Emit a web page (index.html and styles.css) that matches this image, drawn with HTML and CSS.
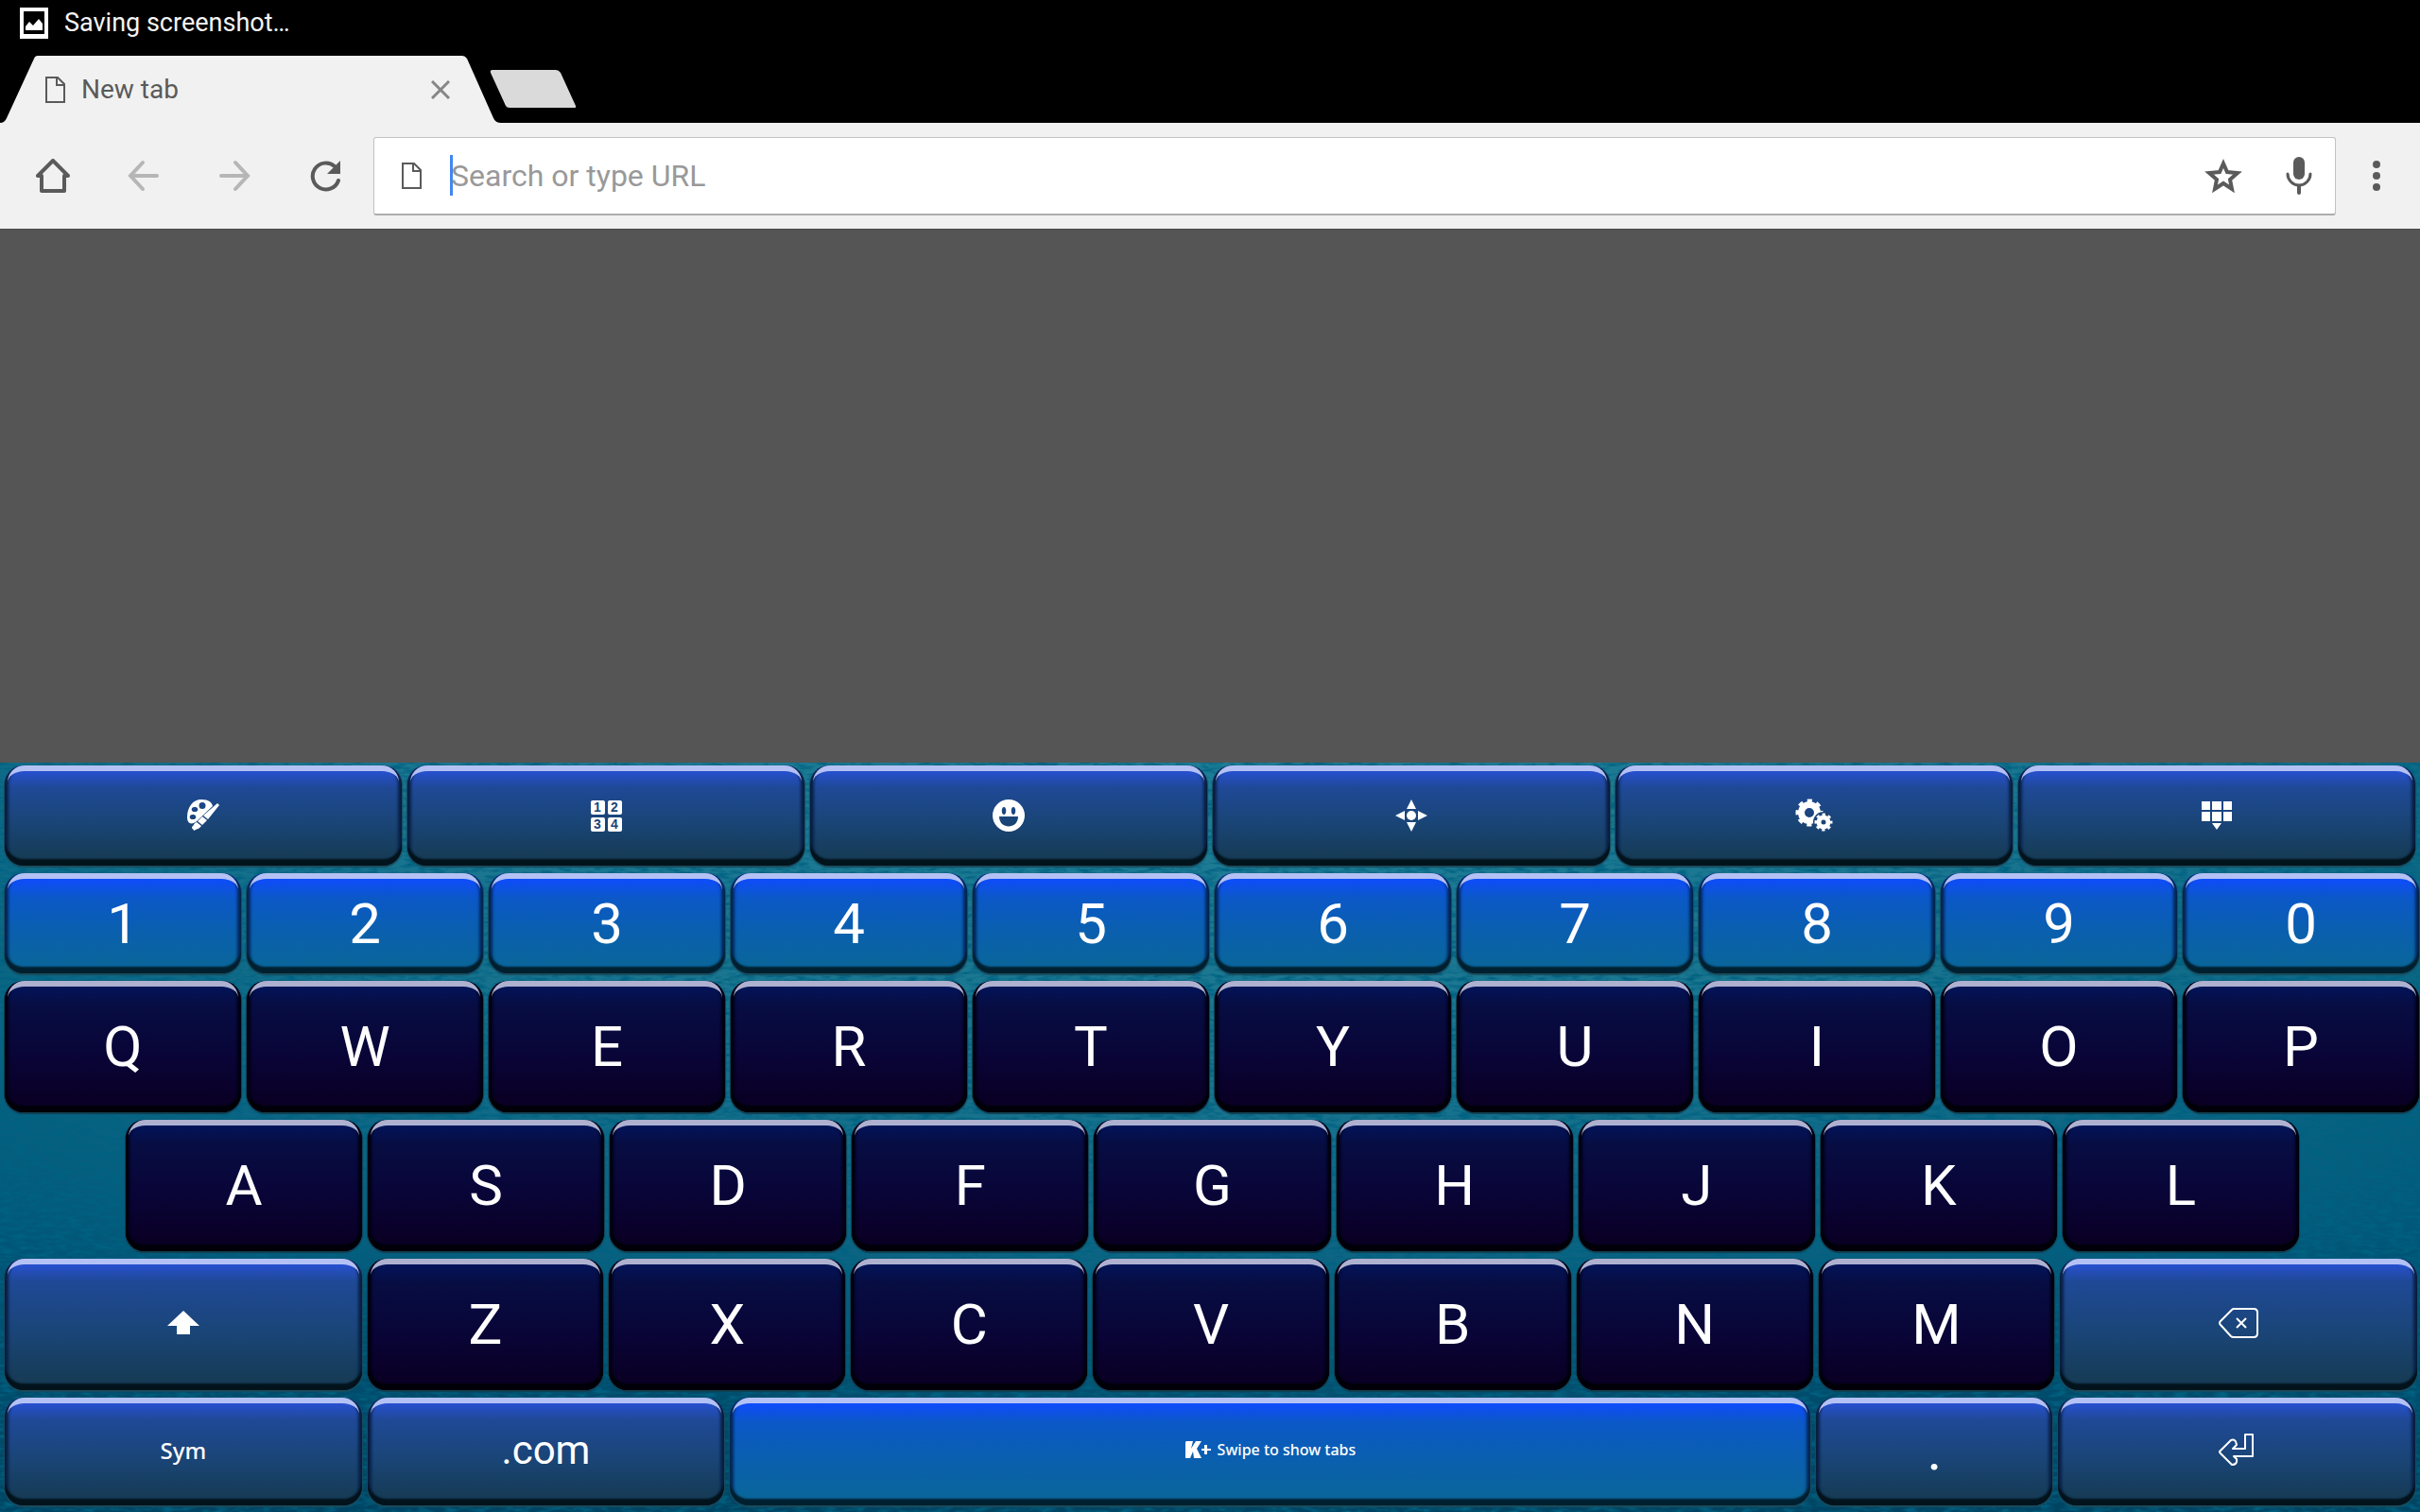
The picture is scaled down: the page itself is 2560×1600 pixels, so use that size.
FILE: index.html
```html
<!DOCTYPE html>
<html lang="en">
<head>
<meta charset="utf-8">
<title>New tab</title>
<link rel="stylesheet" href="styles.css">
</head>
<body>
<div class="screen">
  <header class="status">
    <svg width="30" height="33" viewBox="0 0 30 33" aria-hidden="true"><path fill="#fff" fill-rule="evenodd" d="M0 0H30V33H0ZM4 4V28H26V4Z"/><path fill="#fff" d="M6 24V20L10 15L14 19L20 12L24 17V24Z"/></svg>
    <span>Saving screenshot…</span>
  </header>

  <nav class="tabs">
    <div class="tab">
      <svg width="22" height="28" viewBox="0 0 22 28" aria-hidden="true"><path fill="none" stroke="#5a5a5a" stroke-width="2" d="M1 1H13L20 8V27H1ZM12 1V9H20"/></svg>
      <span class="tab-title">New tab</span>
      <button class="icon-btn" aria-label="Close tab"><svg width="20" height="20" viewBox="0 0 20 20"><path stroke="#868686" stroke-width="3" d="M1 1L19 19M19 1L1 19"/></svg></button>
    </div>
    <button class="new-tab" aria-label="Open a new tab"></button>
  </nav>

  <div class="toolbar">
    <div class="nav-buttons">
      <button class="icon-btn" aria-label="Home"><svg width="36" height="36" viewBox="0 0 36 36"><path fill="none" stroke="#5a5a5a" stroke-width="4" stroke-linejoin="round" d="M2 18H6V34H30V18H34L18 2Z"/></svg></button>
      <button class="icon-btn" aria-label="Back"><svg width="36" height="36" viewBox="0 0 36 36"><path fill="none" stroke="#b6b6b6" stroke-width="4" stroke-linecap="round" d="M17 4L4 18L17 32M5 18H32"/></svg></button>
      <button class="icon-btn" aria-label="Forward"><svg width="36" height="36" viewBox="0 0 36 36"><path fill="none" stroke="#b6b6b6" stroke-width="4" stroke-linecap="round" d="M19 4L32 18L19 32M31 18H4"/></svg></button>
      <button class="icon-btn" aria-label="Reload"><svg width="36" height="36" viewBox="0 0 36 36"><path fill="none" stroke="#5a5a5a" stroke-width="4" stroke-linecap="round" d="M32 23A14 14 0 1 1 28 8"/><path fill="#5a5a5a" d="M34 2V16H20Z"/></svg></button>
    </div>
    <div class="omnibox">
      <svg width="22" height="28" viewBox="0 0 22 28" aria-hidden="true"><path fill="none" stroke="#5a5a5a" stroke-width="2" d="M1 1H13L20 8V27H1ZM12 1V9H20"/></svg>
      <span class="caret"></span>
      <input type="text" placeholder="Search or type URL" aria-label="Search or type URL">
      <div class="omni-actions">
        <button class="icon-btn" aria-label="Bookmark"><svg width="40" height="38" viewBox="0 0 40 38"><path fill="none" stroke="#5a5a5a" stroke-width="4" d="M20 6L24 15L35 16L27 23L29 33L20 27L11 33L13 23L5 16L16 15Z"/></svg></button>
        <button class="icon-btn" aria-label="Voice search"><svg width="28" height="40" viewBox="0 0 28 40"><rect x="8" y="0" width="12" height="24" rx="6" fill="#5a5a5a"/><path fill="none" stroke="#5a5a5a" stroke-width="3" stroke-linecap="round" d="M2 18A12 12 0 0 0 26 18"/><path stroke="#5a5a5a" stroke-width="4" stroke-linecap="round" d="M14 31V38"/></svg></button>
      </div>
    </div>
    <button class="icon-btn menu" aria-label="Menu"><svg width="8" height="32" viewBox="0 0 8 32"><g fill="#5a5a5a"><circle cx="4" cy="4" r="4"/><circle cx="4" cy="16" r="4"/><circle cx="4" cy="28" r="4"/></g></svg></button>
  </div>

  <main class="page"></main>

  <section class="keyboard" aria-label="Keyboard">
    <svg class="grain" aria-hidden="true"><filter id="grain" x="0" y="0" width="100%" height="100%"><feTurbulence type="fractalNoise" baseFrequency="0.07 0.25" numOctaves="3" seed="4"/><feColorMatrix values="0 0 0 0 0  0 0 0 0 0.12  0 0 0 0 0.22  2.6 0 0 0 -1.05"/></filter><rect width="100%" height="100%" filter="url(#grain)"/></svg>

    <div class="row six">
      <button class="key fn" aria-label="Themes"><svg width="36" height="36" viewBox="0 0 36 36"><path fill="#fff" fill-rule="evenodd" d="M16 1C24 1 27 4 28 8L10 25C5 28 1 26 1 20C1 9 7 1 16 1ZM17 4A3.400 3.400 0 1 0 17 11A3.400 3.400 0 1 0 17 4ZM9 9A2.600 2.600 0 1 0 9 14A2.600 2.600 0 1 0 9 9ZM7 17A2.600 2.600 0 1 0 7 22A2.600 2.600 0 1 0 7 17Z"/><path fill="#fff" d="M33 5L35 7L23 22L18 18ZM17 19L22 23L17 28L12 24ZM11 25L16 29C13 33 11 32 8 34C8 32 6 33 6 30C8 29 8 26 11 25Z"/></svg></button>
      <button class="key fn" aria-label="Number pad"><span class="numpad"><i>1</i><i>2</i><i>3</i><i>4</i></span></button>
      <button class="key fn" aria-label="Emoji"><svg width="34" height="34" viewBox="0 0 34 34"><path fill="#fff" fill-rule="evenodd" d="M17 0A17 17 0 1 0 17 34A17 17 0 1 0 17 0ZM12 8C15 8 15 16 12 16C9 16 9 8 12 8ZM22 8C25 8 25 16 22 16C19 16 19 8 22 8ZM7 18H27C27 32 7 32 7 18Z"/></svg></button>
      <button class="key fn" aria-label="Cursor control"><svg width="34" height="34" viewBox="0 0 34 34"><g fill="#fff"><circle cx="17" cy="17" r="5"/><path d="M17 0L22 10H12ZM17 34L22 24H12ZM0 17L10 12V22ZM34 17L24 12V22Z"/></g></svg></button>
      <button class="key fn" aria-label="Settings"><svg width="40" height="36" viewBox="0 0 40 36"><g fill="none" stroke="#fff"><circle cx="15" cy="15" r="8.500" stroke-width="7"/><circle cx="15" cy="15" r="12.500" stroke-width="4" stroke-dasharray="5 4.817" stroke-dashoffset="2.500"/><circle cx="30" cy="25" r="5" stroke="#1b4577" stroke-width="12"/><circle cx="30" cy="25" r="5" stroke-width="5"/><circle cx="30" cy="25" r="8" stroke-width="3" stroke-dasharray="3.200 3.083" stroke-dashoffset="1.600"/></g></svg></button>
      <button class="key fn" aria-label="Hide keyboard"><svg width="32" height="30" viewBox="0 0 32 30"><path fill="#fff" d="M0 0H9V9H0ZM11 0H21V9H11ZM23 0H32V9H23ZM0 11H9V21H0ZM11 11H21V21H11ZM23 11H32V21H23ZM11 23H21L16 30Z"/></svg></button>
    </div>

    <div class="row ten">
      <button class="key num">1</button><button class="key num">2</button><button class="key num">3</button><button class="key num">4</button><button class="key num">5</button><button class="key num">6</button><button class="key num">7</button><button class="key num">8</button><button class="key num">9</button><button class="key num">0</button>
    </div>

    <div class="row ten tall">
      <button class="key">Q</button><button class="key">W</button><button class="key">E</button><button class="key">R</button><button class="key">T</button><button class="key">Y</button><button class="key">U</button><button class="key">I</button><button class="key">O</button><button class="key">P</button>
    </div>

    <div class="row nine tall">
      <button class="key">A</button><button class="key">S</button><button class="key">D</button><button class="key">F</button><button class="key">G</button><button class="key">H</button><button class="key">J</button><button class="key">K</button><button class="key">L</button>
    </div>

    <div class="row shift tall">
      <button class="key fn" aria-label="Shift"><svg width="34" height="25" viewBox="0 0 34 25"><path fill="#fff" d="M17 0L34 16H24V25H10V16H0Z"/></svg></button>
      <button class="key">Z</button><button class="key">X</button><button class="key">C</button><button class="key">V</button><button class="key">B</button><button class="key">N</button><button class="key">M</button>
      <button class="key fn" aria-label="Backspace"><svg width="42" height="32" viewBox="0 0 42 32"><path fill="none" stroke="#fff" stroke-width="2" stroke-linejoin="round" d="M14 2Q15 1 16 1H37Q41 1 41 5V27Q41 31 37 31H16Q14 31 13 30L2 18Q0 16 2 14ZM19 11L29 21M29 11L19 21"/></svg></button>
    </div>

    <div class="row bottom">
      <button class="key fn sym">Sym</button>
      <button class="key fn com">.com</button>
      <button class="key num space"><svg width="27" height="18" viewBox="0 0 27 18" aria-hidden="true"><path fill="#fff" d="M1 0H8L6 8L11 0H17L12 8L17 18H9L8 11L5 18H0V1ZM20 4H23V8H27V10H23V14H20V10H17V8H20Z"/></svg><span>Swipe to show tabs</span></button>
      <button class="key fn">.</button>
      <button class="key fn" aria-label="Enter"><svg width="38" height="34" viewBox="0 0 38 34"><path fill="none" stroke="#fff" stroke-width="2" stroke-linejoin="round" d="M28 1H36V24H16L19 27Q20 33 14 33L2 21Q0 19 2 18L13 7Q18 5 19 12L15 16H28Z"/></svg></button>
    </div>
  </section>
</div>
</body>
</html>
```
FILE: styles.css
```css
* {
  box-sizing: border-box;
}

body {
  margin: 0;
  font-family: Roboto, "Liberation Sans", sans-serif;
  background: #555;
}

button {
  margin: 0;
  padding: 0;
  border: 0;
  background: none;
  color: inherit;
  font: inherit;
}

svg {
  display: block;
  flex: none;
}

.screen {
  display: flex;
  flex-direction: column;
  min-height: 100vh;
}

.status {
  display: flex;
  align-items: center;
  gap: 17px;
  height: 48px;
  padding-left: 21px;
  background: #000;
  color: #f4f4f4;
  font-size: 27px;
}

.tabs {
  display: flex;
  align-items: flex-start;
  padding-top: 11px;
  background: #000;
}

.tab {
  display: flex;
  align-items: center;
  gap: 16px;
  width: 530px;
  height: 71px;
  padding: 0 54px 0 48px;
  background: #f1f1f1;
  clip-path: path("M0 71Q5 71 7 66L36 3Q37 0 40 0H489Q492 0 494 3L522 66Q524 71 530 71Z");
}

.tab-title {
  flex: 1;
  color: #5a5a5a;
  font-size: 28px;
}

.new-tab {
  width: 92px;
  height: 40px;
  margin: 15px 0 0 -12px;
  background: #dadada;
  clip-path: path("M3 0H70Q73 0 75 3L91 38Q92 40 89 40H21Q18 40 17 38L1 3Q0 0 3 0Z");
}

.toolbar {
  display: flex;
  align-items: center;
  height: 113px;
  padding: 0 42px 0 38px;
  background: #f1f1f1;
  border-bottom: 1px solid #4a4a4a;
}

.nav-buttons {
  display: flex;
  gap: 60px;
  margin-right: 33px;
}

.omnibox {
  display: flex;
  flex: 1;
  align-items: center;
  height: 83px;
  padding: 0 24px 0 29px;
  border: 1px solid #c2c2c2;
  border-bottom: 2px solid #adadad;
  border-radius: 3px;
  background: #fff;
}

.caret {
  width: 3px;
  height: 43px;
  margin: 0 -2px 0 29px;
  background: #4285f4;
}

.omnibox input {
  flex: 1;
  min-width: 0;
  height: 60px;
  padding: 0;
  border: 0;
  outline: 0;
  background: none;
  font: 32px Roboto, "Liberation Sans", sans-serif;
}

.omnibox input::placeholder {
  color: #999;
  opacity: 1;
}

.omni-actions {
  display: flex;
  align-items: center;
  gap: 46px;
}

.menu {
  margin-left: 39px;
}

.page {
  flex: 1;
}

.keyboard {
  position: relative;
  display: grid;
  gap: 8px;
  padding: 3px 0 7px;
  background:
    radial-gradient(ellipse 70% 90% at 50% 0, #1e7d96 0, #1b7690 45%, transparent 100%),
    linear-gradient(#005f7e, #00587a 60%, #004463);
}

.grain {
  position: absolute;
  inset: 0;
  width: 100%;
  height: 100%;
}

.row {
  position: relative;
  display: grid;
  gap: 6px;
  padding: 0 1px 0 5px;
  grid-auto-rows: 106px;
}

.tall {
  grid-auto-rows: 139px;
}

.six {
  grid-template-columns: repeat(6, 1fr);
  padding-right: 5px;
}

.ten {
  grid-template-columns: repeat(10, 1fr);
}

.nine {
  grid-template-columns: repeat(9, 1fr);
  padding: 0 5%;
  padding-left: calc(5% + 5px);
}

.shift {
  grid-template-columns: 378fr repeat(7, 250fr) 378fr;
  padding-right: 3px;
}

.bottom {
  grid-template-columns: 378fr 378fr 1144fr 250fr 378fr;
  grid-auto-rows: 114px;
  padding-right: 5px;
}

.key {
  position: relative;
  display: flex;
  align-items: center;
  justify-content: center;
  border-radius: 20px;
  background: linear-gradient(#03145a 6px, #070d42 26px, #090538 55%, #0a0026 90%);
  box-shadow:
    inset 0 -7px 2px #010008,
    inset 4px 0 3px #010012,
    inset -4px 0 3px #010012,
    0 1px 1px 1px #123f50;
  color: #fff;
  font-size: 60px;
}

.key::before {
  content: "";
  position: absolute;
  inset: 0 3px auto;
  height: 32px;
  border-top: 6px solid #aeb2d0;
  border-radius: 18px;
}

.fn {
  background: linear-gradient(#2750d0 6px, #1f4996 24px, #1a4578 55%, #163c58 90%);
  box-shadow:
    inset 0 -7px 2px #03131c,
    inset 4px 0 3px #0a2148,
    inset -4px 0 3px #0a2148,
    0 1px 1px 1px #1a4c5c;
}

.fn::before,
.num::before {
  border-top-color: #b3c1f4;
}

.num {
  background: linear-gradient(#0e4df8 8px, #0b58c8 26px, #0a5fb0 55%, #0a659c 90%);
  box-shadow:
    inset 0 -7px 2px #00202f,
    inset 4px 0 3px #04285c,
    inset -4px 0 3px #04285c,
    0 1px 1px 1px #1a4c5c;
}

.shift .fn,
.bottom .key {
  padding-bottom: 4px;
}

.numpad {
  display: grid;
  grid-template-columns: 15px 15px;
  gap: 3px;
}

.numpad i {
  border-radius: 2px;
  background: #fff;
  color: #1b4577;
  font: bold 14px/15px "Liberation Sans", sans-serif;
  text-align: center;
}

.sym {
  font: 500 24px "Noto Sans", sans-serif;
}

.com {
  font-size: 42px;
}

.space {
  gap: 7px;
  font: 500 16px "Noto Sans", sans-serif;
}
```
